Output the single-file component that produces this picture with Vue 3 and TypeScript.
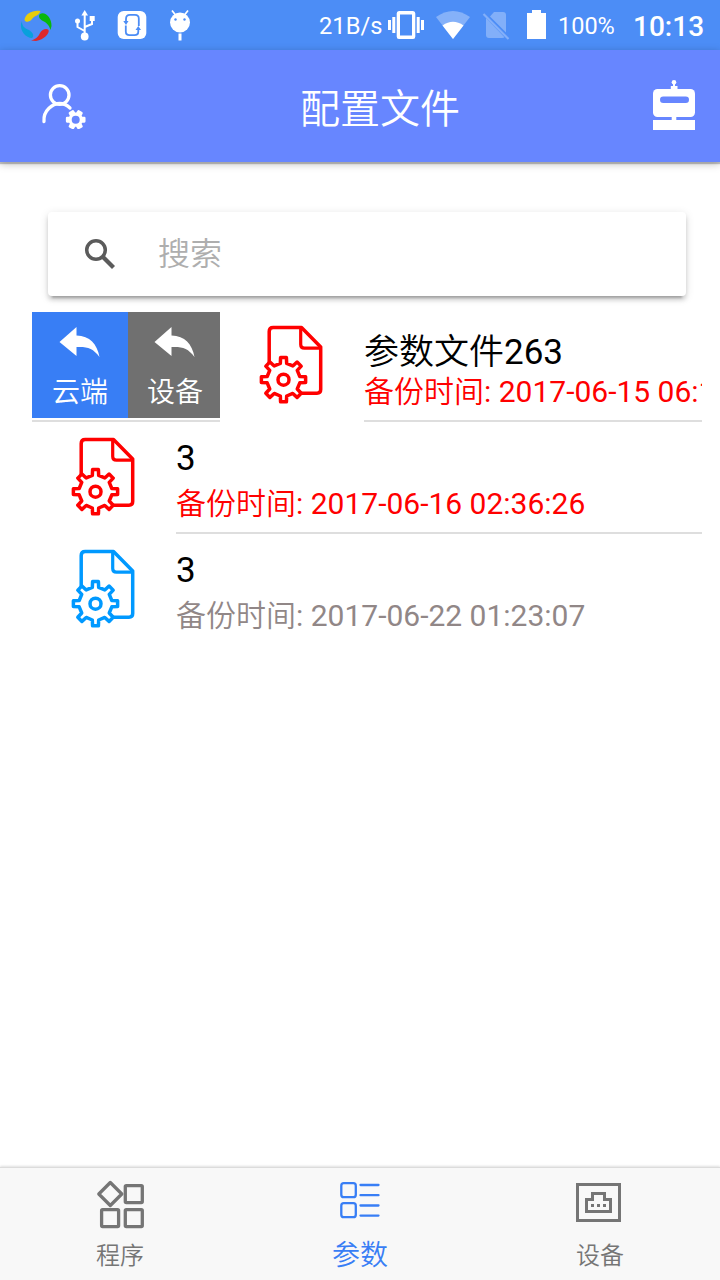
<script setup lang="ts">
interface BackupFile {
  name: string
  index: string
  time: string
  tone: 'red' | 'blue'
  open: boolean
}

const files: BackupFile[] = [
  { name: '参数文件', index: '263', time: '2017-06-15 06:12:41', tone: 'red', open: true },
  { name: '', index: '3', time: '2017-06-16 02:36:26', tone: 'red', open: false },
  { name: '', index: '3', time: '2017-06-22 01:23:07', tone: 'blue', open: false },
]

const actions = [
  { label: '云端', kind: 'cloud' },
  { label: '设备', kind: 'device' },
]

/* Builds a closed cog outline; tooth half-angles are given in degrees. */
function cog(cx: number, cy: number, teeth: number, outer: number, inner: number, tip: number, root: number, start = -90): string {
  const points: string[] = []
  for (let i = 0; i < teeth; i++) {
    const mid = start + (i * 360) / teeth
    const corners: [number, number][] = [[inner, -root], [outer, -tip], [outer, tip], [inner, root]]
    for (const [r, offset] of corners) {
      const a = ((mid + offset) * Math.PI) / 180
      points.push(`${(cx + r * Math.cos(a)).toFixed(2)} ${(cy + r * Math.sin(a)).toFixed(2)}`)
    }
  }
  return `M${points.join('L')}Z`
}

const fileCog = cog(27.5, 57.7, 8, 22.3, 16.6, 7.5, 11)
const userCog = cog(36.7, 38.7, 6, 8.7, 6, 11, 18, 0)
</script>

<template>
  <div class="screen">
    <div class="status">
      <svg class="status-left" viewBox="0 0 220 50">
        <path d="M24.500 20C25 13 34 9.500 40.500 11C39 16 35 15 32 19C30 22 25.500 23 24.500 20Z" fill="#e8cc0b" />
        <path d="M40 14C45 11 52 18 51.500 26L50.500 30C49 25 47 23 43 21C39 19 38 16 40 14Z" fill="#09b80c" />
        <path d="M48.500 30C50 33 44 40 36 41L31 40.500C36 39 38 37 40 33C42 29 47 28 48.500 30Z" fill="#dc282c" />
        <path d="M22 21C22 26 24 28 29 30C34 33 34 37 32 38C26 38 20 31 21 24Z" fill="#09a0dc" />
        <g fill="none" stroke="#fff" stroke-width="2">
          <path d="M84.700 14V36M84.700 31L77.500 27V22M84.700 27L92 24V19" />
        </g>
        <path d="M84.700 10L88 15.500H81.400Z" fill="#fff" />
        <circle cx="84.700" cy="36.500" r="3.900" fill="#fff" />
        <circle cx="77.500" cy="21" r="2.500" fill="#fff" />
        <rect x="89.700" y="16" width="5" height="5" fill="#fff" />
        <rect x="117.700" y="11" width="28.600" height="28" rx="6" fill="#fff" />
        <g fill="none" stroke="#4c8df6" stroke-width="1.800">
          <path d="M126 21V19Q126 14.800 130 14.800H135Q138.800 14.800 138.800 18.500V26" />
          <path d="M138.300 29V31.500Q138.300 35.200 134.500 35.200H129.500Q125.800 35.200 125.800 31.500V25.500" />
        </g>
        <path d="M123.300 21H128.500L126 25ZM135.500 30H141L138.300 26Z" fill="#4c8df6" />
        <circle cx="180" cy="22.500" r="10" fill="#fff" />
        <path d="M172 10.500L175.500 15M188 10.500L184.500 15" stroke="#fff" stroke-width="1.700" />
        <rect x="178.500" y="33.500" width="3" height="7" fill="#fff" />
        <circle cx="175.500" cy="19.500" r="1.200" fill="#4c8df6" />
        <circle cx="184.500" cy="19.500" r="1.200" fill="#4c8df6" />
      </svg>
      <div class="status-right">
        <span class="rate">21B/s</span>
        <svg class="status-icons" viewBox="386 0 164 50">
          <g fill="#fff">
            <path fill-rule="evenodd" d="M399 11H413Q415.300 11 415.300 13.500V36.500Q415.300 39 413 39H399Q396.700 39 396.700 36.500V13.500Q396.700 11 399 11ZM400 14.500V35.500H412V14.500Z" />
            <path d="M388 20H391V30H388ZM392.300 17H395.300V33H392.300ZM416.700 17H419.700V33H416.700ZM421 20H424V30H421Z" />
          </g>
          <path d="M436 17Q453 5 470 17L453 39Z" fill="#fff" opacity=".32" />
          <path d="M442.500 25.500Q453 18 463.500 25.500L453 39Z" fill="#fff" />
          <path d="M490 16.500L494 12H503Q506 12 506 15V32.500Z" fill="#fff" opacity=".3" />
          <path d="M486 18L504.500 37.300Q504 38 502 38H489Q486 38 486 35Z" fill="#fff" opacity=".3" />
          <path d="M483.500 14L508.500 39" stroke="#83aff9" stroke-width="2.200" />
          <path d="M527 13H532V10H541V13H546V39H527Z" fill="#fff" />
        </svg>
        <span class="charge">100%</span>
        <span class="clock">10:13</span>
      </div>
    </div>

    <header class="bar">
      <svg class="user" viewBox="0 0 48 48">
        <g fill="none" stroke="#fff" stroke-width="3.300" stroke-linecap="round">
          <circle cx="20.700" cy="14" r="9.300" />
          <path d="M5 40.500C4 29 14 22.500 20.700 22.500Q26.500 22.500 31 27" />
        </g>
        <path :d="userCog" fill="#fff" stroke="#fff" stroke-width="2.600" stroke-linejoin="round" />
        <circle cx="36.700" cy="38.700" r="4" fill="#6786ff" />
      </svg>
      <h1>配置文件</h1>
      <svg class="robot" viewBox="653 80 42 50">
        <circle cx="674" cy="82.300" r="2.300" fill="#fff" />
        <path d="M673 83H675V86H677.500V90H670.800V86H673ZM671.700 116H676.300V121H671.700ZM653 120H695V130H653Z" fill="#fff" />
        <rect x="653" y="89" width="42" height="28" rx="4.500" fill="#fff" />
        <rect x="660" y="96.500" width="29" height="6.500" rx="3.250" fill="#6786ff" />
      </svg>
    </header>

    <main>
      <label class="search">
        <svg viewBox="0 0 32 32">
          <circle cx="12" cy="12" r="9.300" fill="none" stroke="#5b5b5b" stroke-width="3.500" />
          <path d="M18.500 18.500L29.500 29.500" stroke="#5b5b5b" stroke-width="4.200" />
        </svg>
        <span>搜索</span>
      </label>

      <ul class="list">
        <li v-for="file in files" :key="file.time" class="item" :class="file.tone">
          <div v-if="file.open" class="actions">
            <button v-for="action in actions" :key="action.kind" type="button" :class="action.kind">
              <svg viewBox="0 0 42 30">
                <path d="M.5 15L17.500 0V8.500C31 9 38 17 40.500 30C34 21 28 19.500 17.500 20V29Z" fill="#fff" />
              </svg>
              <span>{{ action.label }}</span>
            </button>
          </div>
          <svg class="file" viewBox="0 0 68 84">
            <g fill="none" stroke="currentColor" stroke-width="3.500" stroke-linejoin="round">
              <path d="M13.200 41V9.500Q13.200 5.500 17.200 5.500H45.500L64.700 25V67.500Q64.700 71.200 61 71.200H45" />
              <path d="M44.700 6V22.500Q44.700 26.200 48.400 26.200H64.700" stroke-width="3.200" />
              <path :d="fileCog" />
              <circle cx="27.500" cy="57.700" r="5.500" />
            </g>
          </svg>
          <div class="info">
            <h2><span v-if="file.name" class="han">{{ file.name }}</span>{{ file.index }}</h2>
            <p><span class="han">备份时间</span>: {{ file.time }}</p>
          </div>
        </li>
      </ul>
    </main>

    <nav class="tabs">
      <a class="tab">
        <svg viewBox="95 1180 50 50">
          <g fill="none" stroke="currentColor" stroke-width="3.300" stroke-linejoin="round">
            <path d="M110.300 1182.500L121.800 1194L110.300 1205.500L98.800 1194Z" />
            <rect x="125.300" y="1185.600" width="17" height="17" rx="1" />
            <rect x="101.600" y="1209.600" width="17" height="17" rx="1" />
            <rect x="125.300" y="1209.600" width="17" height="17" rx="1" />
          </g>
        </svg>
        <span>程序</span>
      </a>
      <a class="tab active">
        <svg viewBox="335 1180 50 50">
          <g fill="none" stroke="currentColor" stroke-width="2.300" stroke-linecap="round">
            <rect x="341.300" y="1183.200" width="14.500" height="14" rx="2.500" />
            <rect x="341.300" y="1203.200" width="14.500" height="14" rx="2.500" />
            <path d="M360.500 1185H378.500M360.500 1195.200H378.500M360.500 1205.500H378.500M360.500 1215.600H378.500" />
          </g>
        </svg>
        <span>参数</span>
      </a>
      <a class="tab">
        <svg viewBox="575 1180 50 50">
          <g fill="none" stroke="currentColor" stroke-width="3">
            <path d="M577.500 1184.500H619.500V1220.500H577.500Z" />
            <path d="M586.500 1211.500V1199.500H592.500V1193.500H604.500V1199.500H610.500V1211.500Z" />
          </g>
          <path d="M591 1204H594V1207H591ZM597 1204H600V1207H597ZM603 1204H606V1207H603Z" fill="currentColor" />
        </svg>
        <span>设备</span>
      </a>
    </nav>
  </div>
</template>

<style>
body {
  margin: 0;
  background: #fff;
}
</style>

<style scoped>
.screen {
  display: flex;
  flex-direction: column;
  width: 720px;
  height: 1280px;
  overflow: hidden;
  background: #fff;
  font-family: Roboto, "Noto Sans CJK SC", sans-serif;
}
svg {
  display: block;
  flex: none;
}
h1, h2, p, ul {
  margin: 0;
  padding: 0;
  font-weight: 400;
}
.han {
  font-weight: 350;
}
.status {
  display: flex;
  justify-content: space-between;
  height: 50px;
  flex: none;
  background: #4c8df6;
  color: #fff;
}
.status-left {
  width: 220px;
  height: 50px;
}
.status-right {
  display: flex;
  align-items: center;
  width: 401px;
  white-space: nowrap;
}
.rate {
  width: 67px;
  padding-top: 2px;
  font-size: 23.7px;
}
.status-icons {
  width: 164px;
  height: 50px;
}
.charge {
  width: 75px;
  padding: 2px 0 0 8px;
  font-size: 23.5px;
}
.clock {
  padding-top: 2px;
  font-size: 28px;
  font-weight: 500;
}
.bar {
  display: flex;
  align-items: center;
  justify-content: space-between;
  box-sizing: border-box;
  height: 112px;
  flex: none;
  padding: 0 25px 0 39px;
  background: #6786ff;
  color: #fff;
  box-shadow: 0 2px 1px rgba(0, 0, 0, .22), 0 2px 8px rgba(0, 0, 0, .25);
}
.user {
  width: 48px;
  height: 48px;
  margin-bottom: 3px;
}
.bar h1 {
  padding: 7px 0 0 20px;
  font-size: 40px;
  font-weight: 350;
  line-height: 60px;
}
.robot {
  width: 42px;
  height: 50px;
  margin-bottom: 2px;
}
main {
  flex: 1;
  padding: 50px 18px 0 32px;
}
.search {
  display: flex;
  align-items: center;
  height: 84px;
  margin: 0 16px;
  border-radius: 4px;
  background: #fff;
  box-shadow: 0 4px 4px rgba(0, 0, 0, .14), 0 6px 2px -4px rgba(0, 0, 0, .2), 0 2px 10px rgba(0, 0, 0, .12);
}
.search svg {
  width: 32px;
  height: 32px;
  margin-left: 36px;
}
.search span {
  margin: -1px 0 0 42px;
  color: #aeaeae;
  font-size: 32px;
  font-weight: 350;
  line-height: 48px;
}
.list {
  margin-top: 14px;
  list-style: none;
}
.item {
  display: flex;
  height: 112px;
  overflow: hidden;
}
.actions {
  display: flex;
  box-sizing: border-box;
  width: 188px;
  height: 112px;
  flex: none;
  padding: 2px 0;
  border-bottom: 2px solid #dedede;
}
.actions button {
  display: flex;
  flex-direction: column;
  align-items: center;
  width: 92px;
  height: 106px;
  padding: 15px 0 0 2px;
  border: 0;
  background: #707070;
  color: #fff;
  font: 350 28px/40px Roboto, "Noto Sans CJK SC", sans-serif;
}
.actions .cloud {
  width: 96px;
  padding-left: 0;
  background: #387ef5;
}
.actions svg {
  width: 42px;
  height: 30px;
}
.actions span {
  margin-top: 16px;
}
.file {
  width: 68px;
  height: 84px;
  margin: 12px 40px 0 36px;
}
.red {
  color: #f00;
}
.blue {
  color: #09f;
}
.info {
  flex: 1;
  min-width: 0;
  box-sizing: border-box;
  height: 112px;
  padding-top: 15px;
  border-bottom: 2px solid #dedede;
}
.item:last-child .info {
  border-bottom: 0;
}
.info h2 {
  color: #000;
  font-size: 35px;
  line-height: 44px;
}
.info p {
  overflow: hidden;
  font-size: 30px;
  line-height: 46px;
  white-space: nowrap;
}
.item:first-child .info {
  padding-top: 21px;
}
.item:first-child .info p {
  line-height: 34px;
}
.blue p {
  color: #918787;
}
.tabs {
  display: flex;
  box-sizing: border-box;
  height: 113px;
  flex: none;
  border-top: 1px solid #dcdcdc;
  background: #f8f8f8;
  box-shadow: 0 -1px 2px rgba(0, 0, 0, .12);
  color: #757575;
}
.tab {
  display: flex;
  flex: 1;
  flex-direction: column;
  align-items: center;
  padding-top: 12px;
  font-size: 24px;
  font-weight: 350;
}
.tab svg {
  width: 50px;
  height: 50px;
}
.tab span {
  margin-top: 8px;
  line-height: 36px;
}
.tab.active {
  color: #387ef5;
  font-size: 28px;
}
</style>
